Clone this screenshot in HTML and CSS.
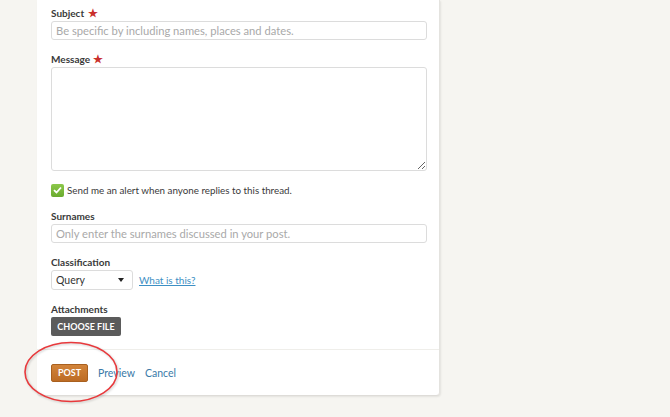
FILE: index.html
```html
<!DOCTYPE html>
<html lang="en">
<head>
  <meta charset="UTF-8" />
  <title>New Thread</title>
  <link rel="stylesheet" href="styles.css">
</head>
<body>
  <div class="card">
    <div class="form-body">
      <div class="field">
        <label class="field-label">Subject <span class="req">&#9733;</span></label>
        <input class="text-input" type="text" placeholder="Be specific by including names, places and dates.">
      </div>
      <div class="field">
        <label class="field-label">Message <span class="req">&#9733;</span></label>
        <textarea class="text-area"></textarea>
      </div>
      <div class="field check-row">
        <span class="check-box">
          <svg width="9" height="8" viewBox="0 0 9 8"><path d="M1 4.2 L3.5 6.5 L8 1.5" fill="none" stroke="#fff" stroke-width="1.8"/></svg>
        </span>
        <span>Send me an alert when anyone replies to this thread.</span>
      </div>
      <div class="field">
        <label class="field-label">Surnames</label>
        <input class="text-input" type="text" placeholder="Only enter the surnames discussed in your post.">
      </div>
      <div class="field">
        <label class="field-label">Classification</label>
        <div class="select-row">
          <div class="select-box">Query <span class="caret"></span></div>
          <a class="help-link" href="#">What is this?</a>
        </div>
      </div>
      <div class="field last">
        <label class="field-label">Attachments</label>
        <button class="file-btn">CHOOSE FILE</button>
      </div>
    </div>
    <div class="form-footer">
      <button class="post-btn">POST</button>
      <a class="footer-link" href="#">Preview</a>
      <a class="footer-link" href="#">Cancel</a>
    </div>
    <svg class="circle-mark" width="100" height="66" viewBox="0 0 100 66">
      <ellipse cx="50" cy="33" rx="46" ry="29.5" fill="none" stroke="#e8393c" stroke-width="1.6"/>
    </svg>
  </div>
</body>
</html>
```

FILE: styles.css
```css
* {
  box-sizing: border-box;
  font-family: Lato, 'Open Sans', sans-serif;
}

body {
  margin: 0;
  background: #f6f5f1;
  height: 417px;
  overflow: hidden;
}

.card {
  position: relative;
  margin-left: 37px;
  width: 403px;
  background: #fff;
  border-right: 1px solid #e4e3df;
  border-bottom: 1px solid #dedcd8;
  border-radius: 0 0 4px 4px;
  box-shadow: 1px 1px 2px rgba(0, 0, 0, 0.08);
}

.form-body {
  padding: 6px 13px 13px 14px;
}

.field {
  margin-bottom: 12px;
}

.field.last {
  margin-bottom: 0;
}

.field-label {
  display: block;
  height: 14px;
  font-size: 10px;
  font-weight: bold;
  color: #3a3a3a;
  line-height: 14px;
  margin-bottom: 1px;
}

.req {
  color: #c9302c;
  font-size: 10.5px;
  line-height: 10px;
  margin-left: 1px;
}

.text-input {
  display: block;
  width: 376px;
  height: 19px;
  border: 1px solid #dcdcdc;
  border-radius: 3px;
  padding: 0 4px;
  font-size: 11.2px;
  color: #333;
}

.text-input::placeholder {
  color: #a9a9a9;
}

.text-area {
  display: block;
  width: 376px;
  height: 104px;
  border: 1px solid #dcdcdc;
  border-radius: 3px;
  margin: 0;
}

.check-row {
  display: flex;
  align-items: center;
  gap: 3px;
  height: 14px;
  font-size: 9.8px;
  color: #3a3a3a;
}

.check-box {
  width: 13px;
  height: 13px;
  border-radius: 2px;
  background: linear-gradient(#8cc84b, #6aab2e);
  display: flex;
  align-items: center;
  justify-content: center;
}

.select-row {
  display: flex;
  align-items: center;
  gap: 6px;
  height: 20px;
}

.select-box {
  position: relative;
  width: 82px;
  height: 20px;
  border: 1px solid #dcdcdc;
  border-radius: 3px;
  font-size: 10.5px;
  color: #333;
  line-height: 18px;
  padding-left: 4px;
}

.caret {
  position: absolute;
  right: 8px;
  top: 7px;
  border-left: 3.5px solid transparent;
  border-right: 3.5px solid transparent;
  border-top: 4px solid #222;
}

.help-link {
  font-size: 10px;
  color: #3d8fc4;
}

.file-btn {
  display: block;
  width: 70px;
  height: 19px;
  border: none;
  border-radius: 2px;
  background: #5b5b5b;
  color: #fff;
  font-size: 9px;
  font-weight: bold;
  padding: 0;
}

.form-footer {
  border-top: 1px solid #efeeea;
  height: 46px;
  padding: 0 14px;
  display: flex;
  align-items: center;
  gap: 10px;
}

.post-btn {
  width: 37px;
  height: 18px;
  border: 1px solid #a9601f;
  border-radius: 2px;
  background: linear-gradient(#d2843a, #bd6c24);
  color: #fff;
  font-size: 9px;
  font-weight: bold;
  padding: 0;
}

.footer-link {
  font-size: 10.5px;
  color: #3a7aa8;
  text-decoration: none;
}

.circle-mark {
  position: absolute;
  left: -16px;
  top: 339px;
  filter: drop-shadow(1px 1px 1px rgba(0, 0, 0, 0.2));
}
```
